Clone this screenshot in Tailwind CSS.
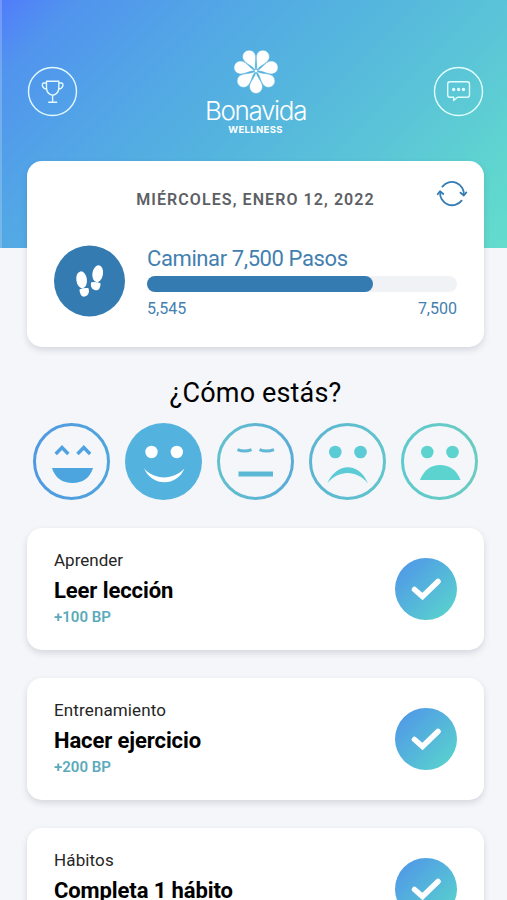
<!DOCTYPE html>
<html lang="es">
<head>
<meta charset="utf-8">
<title>Bonavida Wellness</title>
<script src="https://cdn.jsdelivr.net/npm/@tailwindcss/browser@4"></script>
</head>
<body class="bg-[#f4f6fa] font-['Roboto','Liberation_Sans',sans-serif] text-black">
<div class="relative h-[900px] w-[507px] overflow-hidden">
  <div class="absolute inset-x-0 top-0 h-[248px] border-l-2 border-white/20 bg-[linear-gradient(135deg,#507cfb_0%,#5194ee_10%,#52a5e6_28%,#54b4de_48%,#5bc5d7_70%,#5fd5cf_88%,#63dccd_100%)] bg-origin-border"></div>

  <div class="relative flex flex-col pr-[23px] pl-[27px]">
    <header class="flex h-[161px] items-start justify-between">
      <svg class="mt-[66px] h-[51px] w-[51px]" viewBox="0 0 51 51" fill="none" stroke="#e2faff" stroke-width="1.4" stroke-linecap="round" stroke-linejoin="round">
        <circle cx="25.5" cy="25.5" r="24"/>
        <path d="M19.500 15.200H31.800V21.500C31.800 26 29.300 28.700 25.700 29.200C22 28.700 19.500 26 19.500 21.500ZM19.500 17H17.300C15.300 17 15 18.500 15.500 20C16.100 21.800 17.600 23 19.700 23.200M31.800 17H34C36 17 36.300 18.500 35.800 20C35.200 21.800 33.700 23 31.600 23.200M25.600 29.200V36M21.700 36.200H29.700"/>
      </svg>
      <div class="flex w-[110px] flex-col items-center pt-[48px] text-white">
        <svg class="h-[46px] w-[46px]" viewBox="-23 -23 46 46" fill="white">
          <defs><path id="petal" d="M0 0C-.3 6-6.500 10.500-6.500 15.900A6.500 6.500 0 0 0 6.500 15.900C6.500 10.500 .3 6 0 0Z"/></defs>
          <g stroke="#56b5dd" stroke-width=".5"><use href="#petal"/><use href="#petal" transform="rotate(51.43)"/><use href="#petal" transform="rotate(102.86)"/><use href="#petal" transform="rotate(154.29)"/><use href="#petal" transform="rotate(205.71)"/><use href="#petal" transform="rotate(257.14)"/><use href="#petal" transform="rotate(308.57)"/></g>
          <circle r="1.300"/>
        </svg>
        <div class="mt-[4px] font-['Inter','Roboto',sans-serif] text-[26px] leading-[26px] font-light tracking-[-1.35px]">Bonavida</div>
        <div class="mt-px font-['Inter','Roboto',sans-serif] text-[9.500px] leading-[10px] font-bold tracking-[0.35px]">WELLNESS</div>
      </div>
      <svg class="mt-[66px] h-[51px] w-[51px]" viewBox="0 0 51 51" fill="none" stroke="#e2ffff" stroke-width="1.4" stroke-linejoin="round">
        <circle cx="25.500" cy="25.500" r="24"/>
        <path d="M17 15.700H34.200A2.300 2.300 0 0 1 36.500 18V29A2.300 2.300 0 0 1 34.200 31.300H24.500L20.700 34.500V31.300H17A2.300 2.300 0 0 1 14.700 29V18A2.300 2.300 0 0 1 17 15.700Z"/>
        <path d="M20.700 23.500h.01M25.600 23.500h.01M30.500 23.500h.01" stroke-width="3.400" stroke-linecap="round"/>
      </svg>
    </header>

    <section class="relative h-[186px] w-[457px] rounded-[15px] bg-white px-[27px] pt-[28px] shadow-[0_3px_6px_rgba(60,65,80,0.17)]">
      <h2 class="text-center text-[16px] leading-[22px] font-semibold tracking-[1.08px] text-[#5c6065]">MIÉRCOLES, ENERO 12, 2022</h2>
      <svg class="absolute top-[17px] right-[16px] h-[32px] w-[32px]" viewBox="0 0 32 32" fill="none" stroke="#367cb3" stroke-width="1.800" stroke-linecap="round" stroke-linejoin="round">
        <path d="M6.400 8.600A12 12 0 0 1 27.800 17.200M25.600 22.600A12 12 0 0 1 4.200 13.800"/>
        <path d="M24.500 14.700L27.800 17.500L30.300 14.400M1.700 16.300L4 13.300L7.300 16"/>
      </svg>
      <div class="mt-[34px] flex items-center gap-[22px]">
        <svg class="h-[72px] w-[71px] shrink-0" viewBox="0 0 71 72">
          <circle cx="35.500" cy="36" r="35.500" fill="#347bb1"/>
          <g fill="white">
            <ellipse cx="27.600" cy="34.800" rx="5.300" ry="8.500" transform="rotate(-8 27.600 34.800)"/>
            <path d="M25.500 44.400Q29 42.600 34.300 43.100C35.700 46 35 51 30.700 51.600C27.200 52 25.700 48.500 25.500 44.400Z"/>
            <ellipse cx="43.700" cy="28.700" rx="5.300" ry="8.500" transform="rotate(9 43.700 28.700)"/>
            <path d="M37.200 37.200Q42 36.300 46.500 38.200C46.600 43 44.600 46.300 40.700 45.100C37.300 44 36.300 40.300 37.200 37.200Z"/>
          </g>
        </svg>
        <div class="w-[311px] text-[#4380b0]">
          <div class="text-[22px] leading-[26px] tracking-[-0.4px]">Caminar 7,500 Pasos</div>
          <div class="mt-[4px] h-[16px] rounded-full bg-[#f0f2f5]"><div class="h-full rounded-full bg-[#347bb1]" style="width:73%"></div></div>
          <div class="mt-[8px] -mb-px flex justify-between text-[16px] leading-[18px]"><span>5,545</span><span>7,500</span></div>
        </div>
      </div>
    </section>

    <h1 class="mt-[30px] text-center text-[27px] leading-[32px] tracking-[0.15px]">¿Cómo estás?</h1>
    <div class="mt-[14px] ml-[6px] flex w-[445px] justify-between">
      <svg class="h-[77px] w-[77px]" viewBox="0 0 77 77" fill="none">
        <defs><linearGradient id="ringWarm" x1="0" x2="1"><stop stop-color="#5099e2"/><stop offset="1" stop-color="#4fa5dc"/></linearGradient></defs>
        <circle cx="38.500" cy="38.500" r="37" stroke="url(#ringWarm)" stroke-width="3"/>
        <path d="M22.700 31L29 24.500L35.300 31M44.500 31L50.800 24.500L57.100 31" stroke="#4fa2e1" stroke-width="3.400"/>
        <path d="M19 45H60C57 55 49.500 60 39.500 60S22 55 19 45Z" fill="#4da5e0"/>
      </svg>
      <svg class="h-[77px] w-[77px]" viewBox="0 0 77 77">
        <circle cx="38.500" cy="38.500" r="38.500" fill="#54b2df"/>
        <circle cx="26.500" cy="29" r="6.200" fill="white"/><circle cx="51.800" cy="29" r="6.200" fill="white"/>
        <path d="M19 45.300C29 57.500 49 57.500 59.500 45.300C52 64 27 64 19 45.300Z" fill="white"/>
      </svg>
      <svg class="h-[77px] w-[77px]" viewBox="0 0 77 77" fill="none">
        <defs><linearGradient id="ringNeutral" x1="0" x2="1"><stop stop-color="#62c0cc"/><stop offset="1" stop-color="#5aacd8"/></linearGradient></defs>
        <circle cx="38.500" cy="38.500" r="37" stroke="url(#ringNeutral)" stroke-width="3"/>
        <path d="M20.500 26.700Q27.500 29.500 34.500 26.700M42.500 26.700Q49.500 29.500 57 26.700" stroke="#60b8d4" stroke-width="3"/>
        <path d="M21.500 51H56" stroke="#59b9d5" stroke-width="5"/>
      </svg>
      <svg class="h-[77px] w-[77px]" viewBox="0 0 77 77" fill="none">
        <defs><linearGradient id="ringSad" x1="0" x2="1"><stop stop-color="#5cb5d1"/><stop offset="1" stop-color="#60c5cd"/></linearGradient></defs>
        <circle cx="38.500" cy="38.500" r="37" stroke="url(#ringSad)" stroke-width="3"/>
        <g fill="#5bcbd5"><circle cx="26.300" cy="29" r="6.300"/><circle cx="51.500" cy="29" r="6.300"/>
        <path d="M18.500 60C28 39 50 39 59 60.500C48 46.500 29.500 46.500 18.500 60Z"/></g>
      </svg>
      <svg class="h-[77px] w-[77px]" viewBox="0 0 77 77" fill="none">
        <defs><linearGradient id="ringBad" x1="0" x2="1"><stop stop-color="#5ec9cf"/><stop offset="1" stop-color="#6bccc0"/></linearGradient></defs>
        <circle cx="38.500" cy="38.500" r="37" stroke="url(#ringBad)" stroke-width="3"/>
        <g fill="#5cd3ce"><circle cx="26.300" cy="29" r="6.300"/><circle cx="51.500" cy="29" r="6.300"/>
        <path d="M19 57C23 47 30 42 39 42S56 47 59.500 57Z"/></g>
      </svg>
    </div>

    <main class="mt-[27.500px] flex w-[457px] flex-col gap-[28px]">
      <article class="flex h-[122px] items-center justify-between rounded-[15px] bg-white px-[27px] shadow-[0_3px_6px_rgba(60,65,80,0.17)]">
        <div class="-mt-[2px]">
          <div class="text-[17px] leading-[20px] text-[#252525]">Aprender</div>
          <div class="mt-[8px] text-[22px] leading-[26px] font-bold tracking-[-0.1px]">Leer lección</div>
          <div class="mt-[4px] text-[15px] leading-[18px] font-semibold text-[#5baabc]">+100 BP</div>
        </div>
        <svg class="mt-px h-[62px] w-[62px]" viewBox="0 0 62 62">
          <defs><linearGradient id="done" x1="0" y1="0" x2="1" y2="1"><stop offset=".1" stop-color="#5099e7"/><stop offset=".9" stop-color="#59d1ce"/></linearGradient></defs>
          <circle cx="31" cy="31" r="31" fill="url(#done)"/><path d="M19.500 31.500L27.500 38.500L43 23.500" fill="none" stroke="white" stroke-width="5.500" stroke-linecap="round"/>
        </svg>
      </article>
      <article class="flex h-[122px] items-center justify-between rounded-[15px] bg-white px-[27px] shadow-[0_3px_6px_rgba(60,65,80,0.17)]">
        <div class="-mt-[2px]">
          <div class="text-[17px] leading-[20px] tracking-[0.13px] text-[#252525]">Entrenamiento</div>
          <div class="mt-[8px] text-[22px] leading-[26px] font-bold tracking-[-0.1px]">Hacer ejercicio</div>
          <div class="mt-[4px] text-[15px] leading-[18px] font-semibold text-[#5baabc]">+200 BP</div>
        </div>
        <svg class="mt-px h-[62px] w-[62px]" viewBox="0 0 62 62">
          <circle cx="31" cy="31" r="31" fill="url(#done)"/><path d="M19.500 31.500L27.500 38.500L43 23.500" fill="none" stroke="white" stroke-width="5.500" stroke-linecap="round"/>
        </svg>
      </article>
      <article class="flex h-[122px] items-center justify-between rounded-[15px] bg-white px-[27px] shadow-[0_3px_6px_rgba(60,65,80,0.17)]">
        <div class="-mt-[2px] pb-[22px]">
          <div class="text-[17px] leading-[20px] tracking-[0.13px] text-[#252525]">Hábitos</div>
          <div class="mt-[8px] text-[22px] leading-[26px] font-bold tracking-[-0.1px]">Completa 1 hábito</div>
        </div>
        <svg class="mt-px h-[62px] w-[62px]" viewBox="0 0 62 62">
          <circle cx="31" cy="31" r="31" fill="url(#done)"/><path d="M19.500 31.500L27.500 38.500L43 23.500" fill="none" stroke="white" stroke-width="5.500" stroke-linecap="round"/>
        </svg>
      </article>
    </main>
  </div>
</div>
</body>
</html>
